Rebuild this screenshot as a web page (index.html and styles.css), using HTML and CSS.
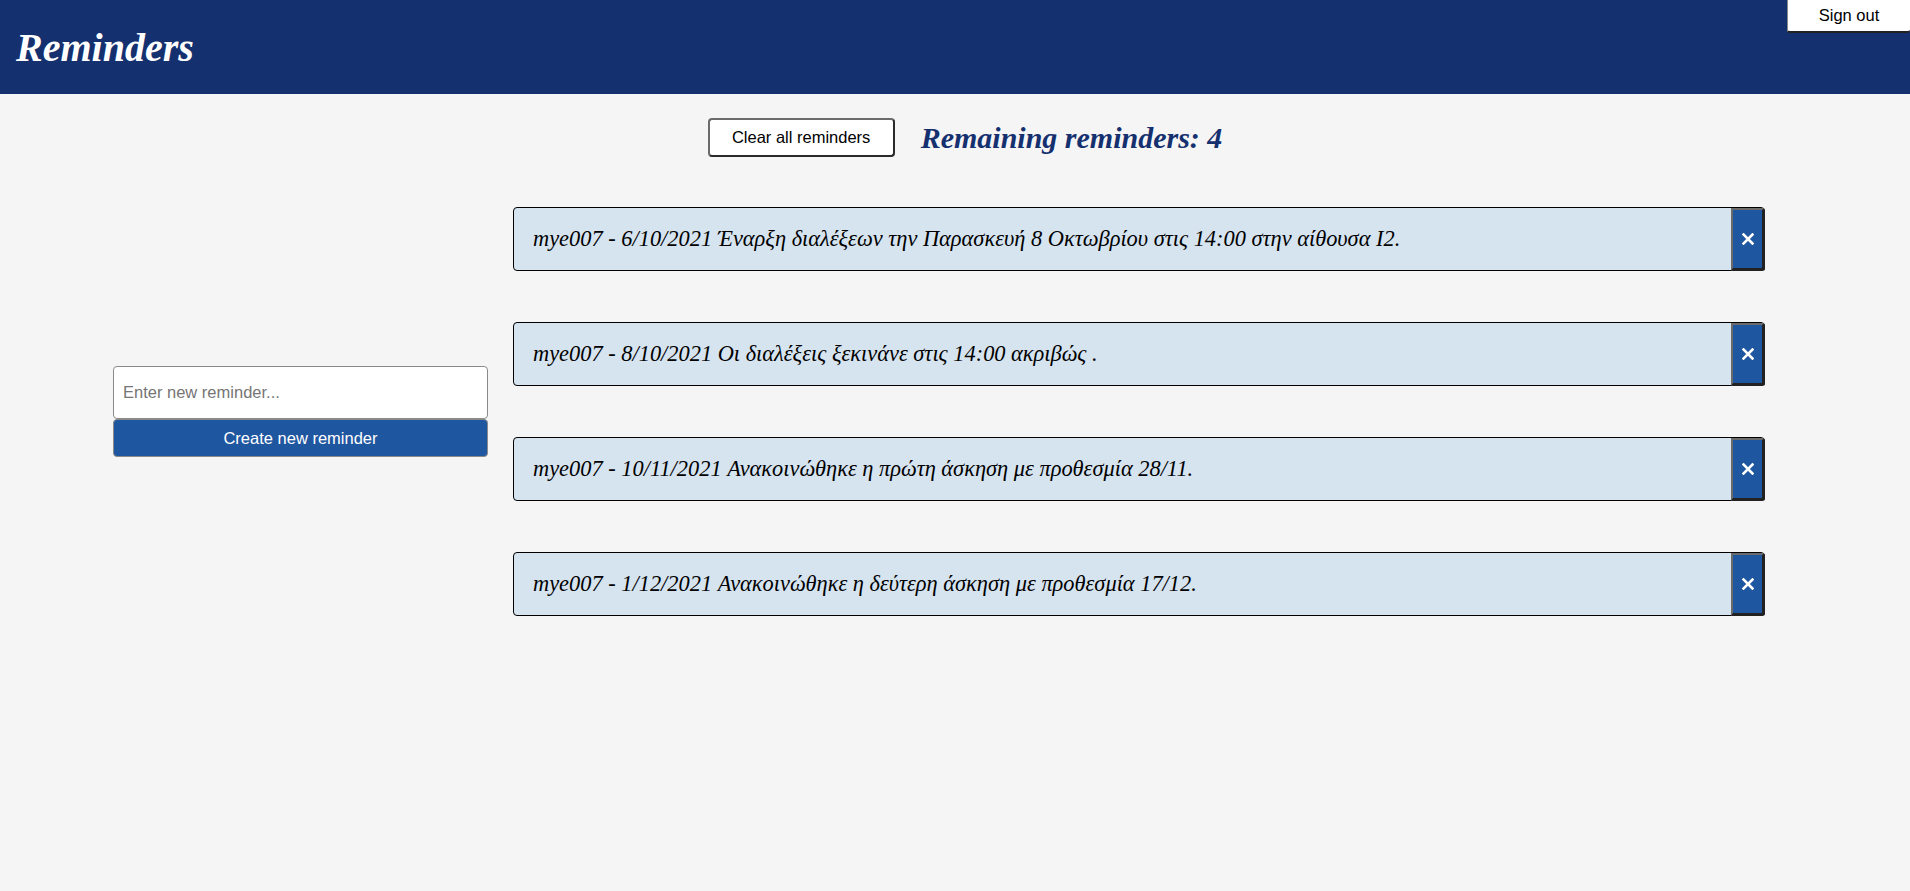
FILE: index.html
```html
<!DOCTYPE html>
<html lang="el">
<head>
<meta charset="utf-8">
<title>Reminders</title>
<link rel="stylesheet" href="styles.css">
</head>
<body>
<header class="header">
  <h1 class="title">Reminders</h1>
  <button class="signout">Sign out</button>
</header>
<div class="toolbar">
  <button class="clear-btn">Clear all reminders</button>
  <h2 class="remaining">Remaining reminders: 4</h2>
</div>
<main class="main">
  <form class="new-form">
    <input class="new-input" type="text" placeholder="Enter new reminder...">
    <button class="create-btn" type="button">Create new reminder</button>
  </form>
  <ul class="list">
    <li class="card">
      <p class="card-text">mye007 - 6/10/2021 Έναρξη διαλέξεων την Παρασκευή 8 Οκτωβρίου στις 14:00 στην αίθουσα Ι2.</p>
      <button class="del-btn" aria-label="delete"><svg width="12" height="12" viewBox="0 0 12 12"><path d="M1.5 1.5 L10.5 10.5 M10.5 1.5 L1.5 10.5" stroke="#fff" stroke-width="2.6" stroke-linecap="square"/></svg></button>
    </li>
    <li class="card">
      <p class="card-text">mye007 - 8/10/2021 Οι διαλέξεις ξεκινάνε στις 14:00 ακριβώς .</p>
      <button class="del-btn" aria-label="delete"><svg width="12" height="12" viewBox="0 0 12 12"><path d="M1.5 1.5 L10.5 10.5 M10.5 1.5 L1.5 10.5" stroke="#fff" stroke-width="2.6" stroke-linecap="square"/></svg></button>
    </li>
    <li class="card">
      <p class="card-text">mye007 - 10/11/2021 Ανακοινώθηκε η πρώτη άσκηση με προθεσμία 28/11.</p>
      <button class="del-btn" aria-label="delete"><svg width="12" height="12" viewBox="0 0 12 12"><path d="M1.5 1.5 L10.5 10.5 M10.5 1.5 L1.5 10.5" stroke="#fff" stroke-width="2.6" stroke-linecap="square"/></svg></button>
    </li>
    <li class="card">
      <p class="card-text">mye007 - 1/12/2021 Ανακοινώθηκε η δεύτερη άσκηση με προθεσμία 17/12.</p>
      <button class="del-btn" aria-label="delete"><svg width="12" height="12" viewBox="0 0 12 12"><path d="M1.5 1.5 L10.5 10.5 M10.5 1.5 L1.5 10.5" stroke="#fff" stroke-width="2.6" stroke-linecap="square"/></svg></button>
    </li>
  </ul>
</main>
</body>
</html>
```
FILE: styles.css
```css
* { box-sizing: border-box; }
html, body { margin: 0; padding: 0; }
body {
  background: #f5f5f5;
  font-family: "Liberation Serif", "Times New Roman", serif;
  min-height: 891px;
}
.header {
  position: relative;
  height: 94px;
  background: #15306f;
  display: flex;
  align-items: center;
  padding-left: 16px;
}
.title {
  margin: 0;
  color: #fff;
  font-size: 40px;
  font-weight: bold;
  font-style: italic;
  font-family: "Liberation Serif", "Times New Roman", serif;
}
.signout {
  position: absolute;
  top: 0;
  right: 0;
  width: 123px;
  height: 33px;
  background: #fff;
  border-style: solid;
  border-width: 0 0 2px 1px;
  border-color: #888 #222 #222 #888;
  border-radius: 0 0 3px 3px;
  font-family: "Liberation Sans", Arial, sans-serif;
  font-size: 16.5px;
  color: #000;
  padding: 0;
}
.toolbar {
  display: flex;
  justify-content: center;
  align-items: center;
  gap: 26px;
  padding: 24px 0 0 20px;
}
.clear-btn {
  width: 187px;
  height: 39px;
  background: #fff;
  border-style: solid;
  border-width: 2px;
  border-color: #6b6b6b #2a2a2a #2a2a2a #6b6b6b;
  border-radius: 4px;
  font-family: "Liberation Sans", Arial, sans-serif;
  font-size: 16.5px;
  color: #000;
  padding: 0;
}
.remaining {
  margin: 0;
  color: #15306f;
  font-size: 30px;
  font-weight: bold;
  font-style: italic;
  line-height: 36px;
}
.main {
  display: flex;
  align-items: center;
  padding: 50px 145px 0 113px;
  gap: 25px;
}
.new-form {
  width: 375px;
  flex: none;
  display: flex;
  flex-direction: column;
  margin: 0;
}
.new-input {
  height: 53px;
  width: 100%;
  border: 1px solid #8a8a8a;
  border-radius: 4px;
  background: #fff;
  padding: 0 9px;
  font-family: "Liberation Sans", Arial, sans-serif;
  font-size: 16.5px;
}
.new-input::placeholder { color: #757575; }
.create-btn {
  height: 38px;
  width: 100%;
  background: #1f56a0;
  border: 1px solid #8a8a8a;
  border-radius: 4px;
  color: #fff;
  font-family: "Liberation Sans", Arial, sans-serif;
  font-size: 16.5px;
  padding: 0;
}
.list {
  flex: 1;
  list-style: none;
  margin: 0;
  padding: 0;
  display: flex;
  flex-direction: column;
  gap: 51px;
}
.card {
  height: 64px;
  display: flex;
  align-items: stretch;
  background: #d6e4f0;
  border: 1px solid #000;
  border-radius: 4px;
}
.card-text {
  flex: 1;
  margin: 0;
  padding-left: 19px;
  display: flex;
  align-items: center;
  font-size: 22.4px;
  font-style: italic;
  color: #000;
}
.del-btn {
  width: 34px;
  flex: none;
  background: #1f56a0;
  border-style: solid;
  border-width: 2px 3px 3px 2px;
  border-color: #6b6b6b #222 #222 #6b6b6b;
  border-radius: 0 3px 3px 0;
  margin: 0 -1px -1px 0;
  padding: 0;
  display: flex;
  align-items: center;
  justify-content: center;
}
```
